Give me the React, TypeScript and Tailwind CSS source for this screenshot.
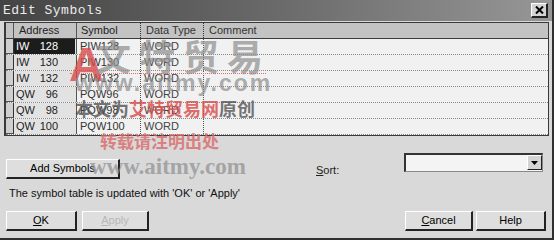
import React from 'react';

const rows = [
  { t: 'IW', n: '128', s: 'PIW128', sel: true },
  { t: 'IW', n: '130', s: 'PIW130', sel: false },
  { t: 'IW', n: '132', s: 'PIW132', sel: false },
  { t: 'QW', n: '96', s: 'PQW96', sel: false },
  { t: 'QW', n: '98', s: 'PQW98', sel: false },
  { t: 'QW', n: '100', s: 'PQW100', sel: false },
];

const btn =
  'h-[20px] flex items-center justify-center bg-[#dedede] border-t border-l border-t-white border-l-white border-r-2 border-b-2 border-r-[#222] border-b-[#222] text-[11px]';

const App: React.FC = () => {
  return (
    <div
      className="relative w-[554px] h-[240px] overflow-hidden bg-[#d9d9d9] border-r-2 border-b-2 border-[#303030] flex flex-col"
      style={{ fontFamily: '"Liberation Sans", Arial, sans-serif' }}
    >
      {/* Title bar */}
      <div className="h-[21px] shrink-0 flex items-center justify-between pl-[3px] pr-[4px] bg-gradient-to-r from-[#444] via-[#6a6a6a] to-[#979797]">
        <span
          className="text-[13px] text-[#ececec] tracking-[0.5px]"
          style={{ fontFamily: '"Liberation Mono", "Courier New", monospace' }}
        >
          Edit Symbols
        </span>
        <div className="w-[17px] h-[15px] bg-[#d4d4d4] border-t border-l border-white border-r-2 border-b-2 border-r-[#222] border-b-[#222] flex items-center justify-center">
          <svg width="9" height="8" viewBox="0 0 9 8">
            <path d="M1 0.5 L8 7.5 M8 0.5 L1 7.5" stroke="#000" strokeWidth="2" />
          </svg>
        </div>
      </div>

      {/* Table */}
      <div className="ml-[4px] mt-[1px] w-[545px] border-l-2 border-t border-r border-b border-[#3a3a3a] bg-[#f1f1f1] text-[11px] text-[#222]">
        <div className="flex h-[16px] bg-[#c3c3c3] border-b border-[#3a3a3a]">
          <div className="w-[8px] border-r border-[#555]" />
          <div className="w-[63px] pl-[5px] border-r border-[#555] leading-[15px]">Address</div>
          <div className="w-[64px] pl-[4px] border-r border-dotted border-[#333] leading-[15px]">Symbol</div>
          <div className="w-[63px] pl-[5px] border-r border-dotted border-[#333] leading-[15px] text-[#333]">Data Type</div>
          <div className="flex-1 pl-[5px] leading-[15px] text-[#333]">Comment</div>
        </div>
        {rows.map((r, i) => (
          <div key={i} className="flex h-[16px] border-b border-dotted border-[#8a8a8a]">
            <div className="w-[8px] bg-[#cfcfcf] border-r border-[#333] border-b border-b-[#555]" />
            <div className="w-[63px] bg-[#e2e2e2] border-r border-[#555] flex">
              <div
                className={`w-[61px] flex items-center justify-between pl-[2px] pr-[17px] ${
                  r.sel ? 'bg-[#1c1c1c] text-white' : ''
                }`}
              >
                <span>{r.t}</span>
                <span>{r.n}</span>
              </div>
            </div>
            <div className="w-[64px] pl-[3px] flex items-center border-r border-dotted border-[#555] text-[#333]">
              {r.s}
            </div>
            <div className="w-[63px] pl-[3px] flex items-center border-r border-dotted border-[#555] text-[#444]">
              WORD
            </div>
            <div className="flex-1" />
          </div>
        ))}
      </div>

      {/* Add symbols + sort */}
      <div className="flex items-start mt-[17px] pl-[6px]">
        <div className={`${btn} w-[114px] mt-[6px] text-black`}>Add Symbols</div>
        <span className="ml-[196px] mt-[9px] text-[11px] text-[#222]">
          <span className="underline">S</span>ort:
        </span>
        <div className="ml-[65px] w-[139px] h-[19px] bg-[#f4f4f4] border-t-2 border-l-2 border-[#333] border-r border-b border-r-[#888] border-b-[#888] flex justify-end">
          <div className="w-[15px] h-[15px] bg-[#d4d4d4] border-t border-l border-white border-r border-b border-r-[#222] border-b-[#222] flex items-center justify-center">
            <svg width="7" height="4" viewBox="0 0 7 4">
              <path d="M0 0 H7 L3.5 4 Z" fill="#000" />
            </svg>
          </div>
        </div>
      </div>

      <div className="mt-[7px] pl-[9px] text-[11px] text-[#111] leading-[14px]">
        The symbol table is updated with 'OK' or 'Apply'
      </div>

      {/* Buttons */}
      <div className="flex items-center mt-[11px] pl-[6px]">
        <div className={`${btn} w-[71px] text-black`}>
          <span className="underline">O</span>K
        </div>
        <div className={`${btn} w-[67px] ml-[5px] text-[#b8b8b8]`}>
          <span className="underline">A</span>pply
        </div>
        <div className={`${btn} w-[68px] ml-[256px] text-black`}>
          <span className="underline">C</span>ancel
        </div>
        <div className={`${btn} w-[70px] ml-[3px] text-black`}>Help</div>
      </div>

      {/* Watermark overlay */}
      <div className="absolute inset-0 pointer-events-none">
        <span
          className="absolute left-[69px] top-[41px] text-[48px] font-bold text-[#d94c4c] opacity-80 leading-none"
          style={{ fontFamily: '"Liberation Sans", Arial, sans-serif' }}
        >
          A
        </span>
        <span
          className="absolute left-[95px] top-[37px] text-[36px] font-bold text-[#8e8e8e] opacity-70 leading-none tracking-[8px]"
          style={{ fontFamily: '"Noto Sans CJK SC", sans-serif' }}
        >
          文特贸易
        </span>
        <div className="absolute left-[70px] top-[73px] w-[196px] border-t border-dotted border-[#d97070]" />
        <span
          className="absolute left-[75px] top-[72px] text-[23px] font-bold text-[#8e8e8e] opacity-70 leading-none tracking-[2px]"
          style={{ fontFamily: '"Liberation Sans", Arial, sans-serif' }}
        >
          www.aitmy.com
        </span>
        <span
          className="absolute left-[75px] top-[99px] text-[18px] font-bold opacity-80 leading-none"
          style={{ fontFamily: '"Noto Sans CJK SC", serif' }}
        >
          <span className="text-[#555]">本文为</span>
          <span className="text-[#d94c4c]">艾特贸易网</span>
          <span className="text-[#555]">原创</span>
        </span>
        <span
          className="absolute left-[100px] top-[132px] text-[17px] font-bold text-[#d96a6a] opacity-80 leading-none"
          style={{ fontFamily: '"Noto Sans CJK SC", serif' }}
        >
          转载请注明出处
        </span>
        <span
          className="absolute left-[90px] top-[155px] text-[23px] font-bold text-[#8e8e8e] opacity-70 leading-none"
          style={{ fontFamily: '"Liberation Serif", "Times New Roman", serif' }}
        >
          www.aitmy.com
        </span>
      </div>
    </div>
  );
};

export default App;
